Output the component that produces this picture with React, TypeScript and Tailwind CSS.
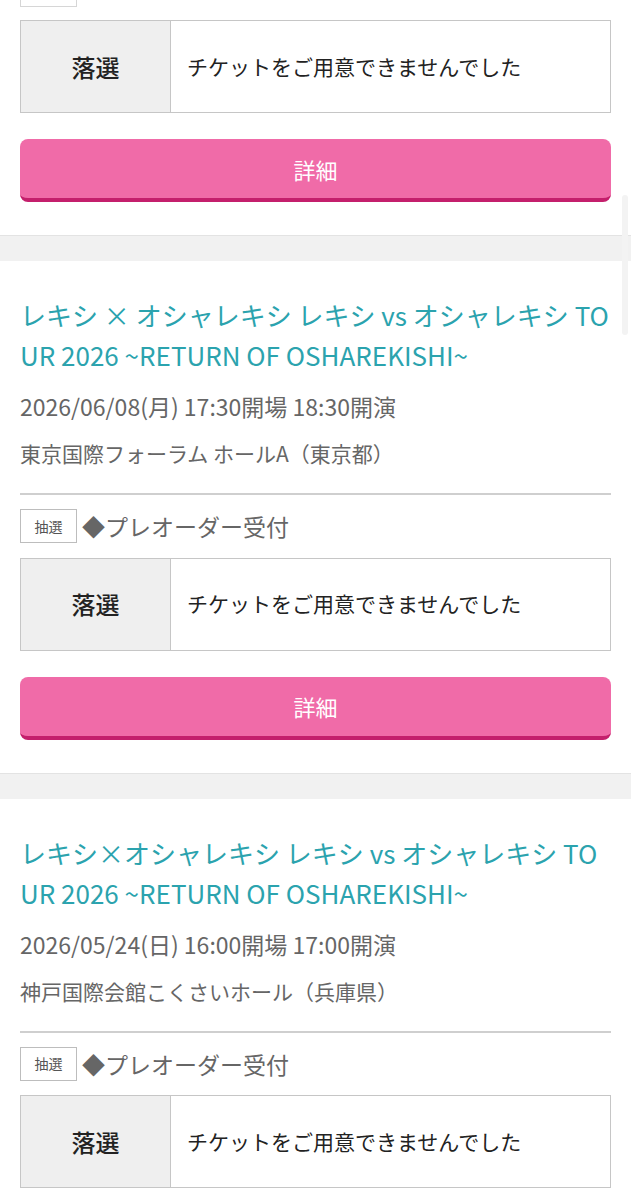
import React from 'react'

interface Event {
  title: string
  date: string
  venue: string
}

const events: Event[] = [
  {
    title: 'レキシ × オシャレキシ レキシ vs オシャレキシ TOUR 2026 ~RETURN OF OSHAREKISHI~',
    date: '2026/06/08(月) 17:30開場 18:30開演',
    venue: '東京国際フォーラム ホールA（東京都）'
  },
  {
    title: 'レキシ×オシャレキシ レキシ vs オシャレキシ TOUR 2026 ~RETURN OF OSHAREKISHI~',
    date: '2026/05/24(日) 16:00開場 17:00開演',
    venue: '神戸国際会館こくさいホール（兵庫県）'
  }
]

const ResultTable = () => (
  <div className="flex h-[93px] border border-[#c6c6c6]">
    <div className="w-[150px] shrink-0 bg-[#efefef] border-r border-[#c6c6c6] flex items-center justify-center text-[24px] font-medium text-[#222]">
      落選
    </div>
    <div className="flex items-center pl-[16px] text-[21px] text-[#222]">
      チケットをご用意できませんでした
    </div>
  </div>
)

const DetailButton = () => (
  <button className="mt-[26px] w-full h-[63px] rounded-lg bg-[#f06ba8] border-b-4 border-[#c41f6c] text-white text-[22px] flex items-center justify-center pt-[1px]">
    詳細
  </button>
)

const Band = () => <div className="h-[26px] bg-[#f1f1f1] border-t border-[#e3e3e3]" />

const EventCard = ({ title, date, venue }: Event) => (
  <div className="px-5 pt-[34px] pb-[33px]">
    <h2 className="text-[26px] leading-[40px] text-[#2ba3ae] break-all">{title}</h2>
    <p className="mt-[15px] text-[23px] leading-[32px] text-[#666]">{date}</p>
    <p className="mt-[15px] text-[21px] leading-[32px] text-[#666]">{venue}</p>
    <div className="mt-[24px] border-t-2 border-[#cfcfcf]" />
    <div className="mt-[14px] flex items-center">
      <span className="w-[57px] h-[34px] border border-[#bdbdbd] flex items-center justify-center text-[14px] text-[#555]">
        抽選
      </span>
      <span className="ml-[5px] text-[23px] text-[#666]">◆プレオーダー受付</span>
    </div>
    <div className="mt-[14px]">
      <ResultTable />
    </div>
    <DetailButton />
  </div>
)

export default function App() {
  return (
    <div
      className="relative w-[631px] h-[1200px] overflow-hidden bg-white"
      style={{ fontFamily: '"Noto Sans CJK JP", "Noto Sans", sans-serif' }}
    >
      <div className="px-5 pb-[33px]">
        <div className="w-[57px] h-[7px] border-x border-b border-[#d6d6d6]" />
        <div className="mt-[13px]">
          <ResultTable />
        </div>
        <DetailButton />
      </div>
      <Band />
      {events.map((e, i) => (
        <React.Fragment key={i}>
          <EventCard {...e} />
          <Band />
        </React.Fragment>
      ))}
      <div className="absolute right-[3px] top-[195px] w-[6px] h-[140px] rounded-full bg-[#f3f3f3]" />
    </div>
  )
}
